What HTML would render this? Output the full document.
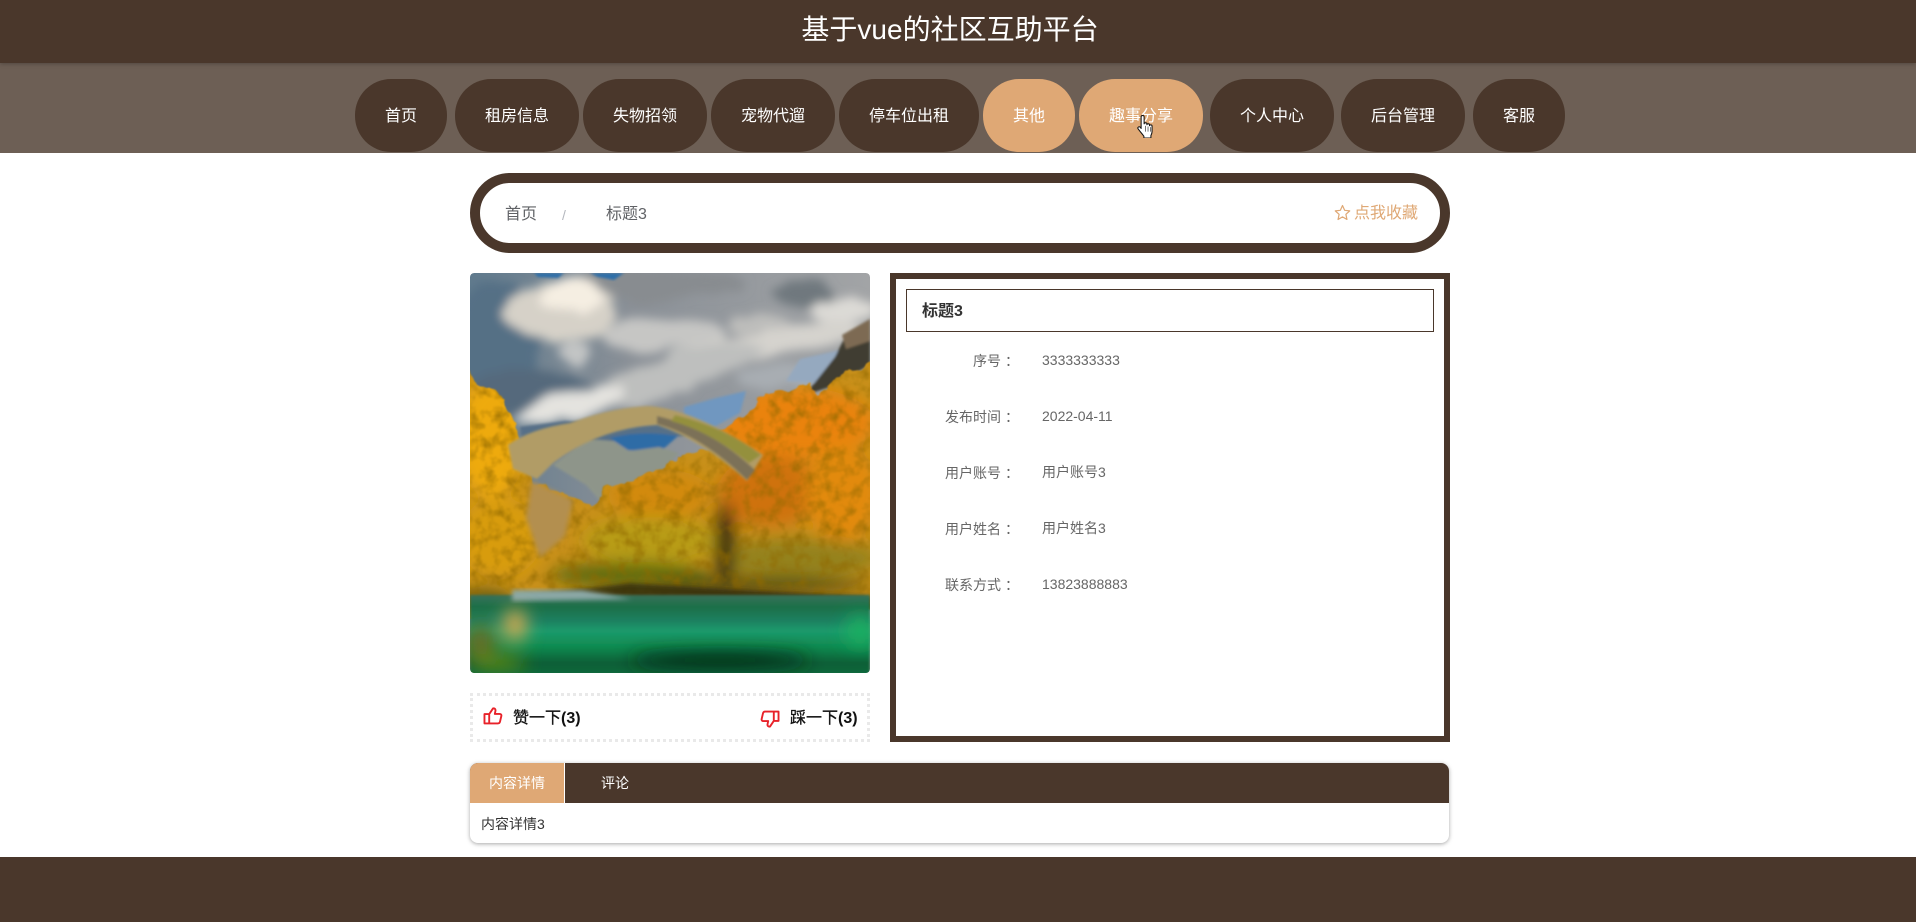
<!DOCTYPE html>
<html lang="zh-CN">
<head>
<meta charset="utf-8">
<title>基于vue的社区互助平台</title>
<style>
*{margin:0;padding:0;box-sizing:border-box}
html,body{width:1916px;height:922px;overflow:hidden;background:#fff}
body{position:relative;font-family:"Liberation Sans","Noto Sans CJK SC",sans-serif;color:#333}
.a{position:absolute;white-space:nowrap}
.hd{left:0;top:0;width:1916px;height:63px;background:#4a372b;box-shadow:0 1px 4px rgba(0,0,0,.25);z-index:2}
.ttl{left:-8px;top:10px;width:1916px;text-align:center;color:#fff;font-size:28px;line-height:40px;z-index:3}
.nv{left:0;top:63px;width:1916px;height:90px;background:#6d5f55}
.b{top:79px;height:73px;border-radius:36px;background:#4a372b;color:#fff;font-size:16px;line-height:75px;text-align:center}
.b.on{background:#dfa875}
.bc{left:470px;top:173px;width:980px;height:80px;border:10px solid #4a372b;border-radius:40px;background:#fff}
.lb{width:70px;text-align:right;left:945px;font-size:14px;line-height:20px;color:#666}
.lb i{font-style:normal;position:relative;left:4px}
.vl{left:1042px;font-size:14px;line-height:20px;color:#666}
.info{left:890px;top:273px;width:560px;height:469px;border:6px solid #4a372b;background:#fff}
.tb{left:906px;top:289px;width:528px;height:43px;border:1px solid #4a372b;background:#fff}
.lk{left:470px;top:693px;width:400px;height:49px;border:3px dotted #e9e9e9}
.zz{font-size:16px;line-height:22px;color:#111;-webkit-text-stroke:.3px #111}
.zz b{-webkit-text-stroke:0}
.tabs{left:470px;top:763px;width:979px;height:80px;border-radius:8px;box-shadow:0 1px 4px rgba(0,0,0,.35);background:#fff;overflow:hidden}
</style>
</head>
<body>
<div class="a hd"></div>
<div class="a ttl">基于vue的社区互助平台</div>
<div class="a nv"></div>
<div class="a b" style="left:355px;width:92px">首页</div>
<div class="a b" style="left:455px;width:124px">租房信息</div>
<div class="a b" style="left:583px;width:124px">失物招领</div>
<div class="a b" style="left:711px;width:124px">宠物代遛</div>
<div class="a b" style="left:839px;width:140px">停车位出租</div>
<div class="a b on" style="left:983px;width:92px">其他</div>
<div class="a b on" style="left:1079px;width:124px">趣事分享</div>
<div class="a b" style="left:1210px;width:124px">个人中心</div>
<div class="a b" style="left:1341px;width:124px">后台管理</div>
<div class="a b" style="left:1473px;width:92px">客服</div>

<svg class="a" style="left:1136px;top:115px;z-index:5" width="19" height="23" viewBox="1 .5 14 20">
<path d="M4.200 2c0-1.500 2.600-1.500 2.600 0v6.200c0-1.200 2.400-1.200 2.400 0v.8c0-1.100 2.300-1.100 2.300 0v.8c0-1 2.200-1 2.200.3v4.900c0 1.500-.5 2.300-1 3.300v2.200H6.600v-1.600c-1-1.300-2.200-2.700-5-6.300-.9-1.200.7-2.500 1.800-1.500l.8 1.100z" fill="#fff" stroke="#111" stroke-width=".9" stroke-linejoin="round"/>
<path d="M8 10v5M10.200 10.500v4.500M12.400 11v4" stroke="#555" stroke-width=".7"/>
</svg>

<div class="a bc"></div>
<div class="a" style="left:505px;top:204px;font-size:16px;line-height:22px;color:#606266">首页</div>
<div class="a" style="left:562px;top:204px;font-size:14px;line-height:22px;color:#b4b7be">/</div>
<div class="a" style="left:606px;top:204px;font-size:16px;line-height:22px;color:#606266">标题3</div>
<svg class="a" style="left:1334px;top:204px" width="17" height="17" viewBox="0 0 24 24"><path d="M12 2.200l3 6.700 7.200.8-5.400 4.900 1.500 7.200L12 18.200l-6.300 3.600 1.500-7.200L1.800 9.700 9 8.900z" fill="none" stroke="#dfa875" stroke-width="1.700" stroke-linejoin="round"/></svg>
<div class="a" style="left:1354px;top:203px;font-size:16px;line-height:22px;color:#dfa875">点我收藏</div>

<svg class="a" style="left:470px;top:273px;border-radius:4px" width="400" height="400" viewBox="0 0 400 400">
<defs>
<clipPath id="c"><rect width="400" height="400" rx="4"/></clipPath>
<linearGradient id="sky" x1="0" y1="0" x2="1" y2="0"><stop offset="0" stop-color="#607a8d"/><stop offset=".4" stop-color="#8a9097"/><stop offset="1" stop-color="#a2a4a6"/></linearGradient>
<linearGradient id="wat" x1="0" y1="0" x2="0" y2="1"><stop offset="0" stop-color="#38705a"/><stop offset=".15" stop-color="#1c6f48"/><stop offset=".32" stop-color="#1e8060"/><stop offset=".45" stop-color="#1b9a6c"/><stop offset=".65" stop-color="#0f8a50"/><stop offset=".85" stop-color="#0c5e36"/><stop offset="1" stop-color="#0e6a3c"/></linearGradient>
<filter id="b1" x="-20%" y="-20%" width="140%" height="140%"><feGaussianBlur stdDeviation="1.200"/></filter>
<filter id="b2" x="-20%" y="-20%" width="140%" height="140%"><feGaussianBlur stdDeviation="2.500"/></filter>
<filter id="b8" x="-40%" y="-40%" width="180%" height="180%"><feGaussianBlur stdDeviation="9"/></filter>
<filter id="b12" x="-60%" y="-60%" width="220%" height="220%"><feGaussianBlur stdDeviation="8"/></filter>
<filter id="cl" x="-20%" y="-20%" width="140%" height="140%"><feTurbulence type="fractalNoise" baseFrequency=".02 .035" numOctaves="3" seed="11" result="n"/><feDisplacementMap in="SourceGraphic" in2="n" scale="22" xChannelSelector="R" yChannelSelector="G"/><feGaussianBlur stdDeviation="5"/></filter>
<filter id="rough" x="-5%" y="-5%" width="110%" height="110%"><feTurbulence type="fractalNoise" baseFrequency=".07" numOctaves="3" seed="4" result="n"/><feDisplacementMap in="SourceGraphic" in2="n" scale="12" xChannelSelector="R" yChannelSelector="G"/><feGaussianBlur stdDeviation=".8"/></filter>
<filter id="spk" x="0" y="0" width="100%" height="100%"><feTurbulence type="fractalNoise" baseFrequency=".08" numOctaves="3" seed="9"/><feColorMatrix type="matrix" values="0 0 0 0 .28  0 0 0 0 .14  0 0 0 0 0  1.600 0 0 0 -.66"/><feGaussianBlur stdDeviation=".7"/></filter>
<mask id="tm"><path d="M-10 85L8 110 36 128 48 158 44 182 64 208 110 228 125 235 135 215 170 205 210 185 240 175 250 158 265 150 290 125 340 110 345 124 375 100 410 88V335L-10 345z" fill="#fff" filter="url(#rough)"/></mask>
</defs>
<g clip-path="url(#c)">
<rect width="400" height="400" fill="url(#sky)"/>
<g filter="url(#cl)">
<ellipse cx="25" cy="70" rx="45" ry="60" fill="#546f85"/>
<ellipse cx="60" cy="120" rx="70" ry="20" fill="#54697c"/>
<ellipse cx="190" cy="12" rx="90" ry="16" fill="#888c90"/>
<ellipse cx="335" cy="22" rx="32" ry="12" fill="#70787e"/>
<ellipse cx="92" cy="38" rx="55" ry="30" fill="#d6d1c8"/>
<ellipse cx="100" cy="22" rx="28" ry="16" fill="#f5eee2"/>
<ellipse cx="195" cy="62" rx="62" ry="18" fill="#c6c6c4"/>
<ellipse cx="285" cy="50" rx="28" ry="10" fill="#bdbdbb"/>
<ellipse cx="372" cy="38" rx="36" ry="12" fill="#dcdad6"/>
<ellipse cx="300" cy="70" rx="95" ry="14" fill="#d5d3ce" transform="rotate(-10 300 70)"/>
<ellipse cx="190" cy="105" rx="110" ry="18" fill="#bebfbe" transform="rotate(-18 190 105)"/>
<ellipse cx="100" cy="132" rx="55" ry="13" fill="#e4e3df" transform="rotate(-18 100 132)"/>
<ellipse cx="105" cy="80" rx="14" ry="12" fill="#c3c5c5"/>
<ellipse cx="320" cy="105" rx="55" ry="12" fill="#a8adb2"/>
</g>
<path d="M64 0h30l-6 5-20-1zM120 0h34l-10 7-16-3z" fill="#2f6ea8" filter="url(#b1)"/>
<g filter="url(#b1)">
<path d="M50 154l45-6 60 4 60-4 8 14-60 6-70 0-40 2z" fill="#566f88"/>
<path d="M214 134l32-9 30-7-6 22-26 14-30-8z" fill="#6f97c0"/>
<path d="M316 108l14-22 40-9-25 33z" fill="#95a9bf"/>
<path d="M335 122l30-38 10-20 25-14v42l-40 22z" fill="#3f3c31"/>
<path d="M372 62l28-16v22l-24 8z" fill="#7d6a52"/>
<path d="M140 165q30-8 68-2l-18 16-32-2z" fill="#2d6ca6"/>
<path d="M83 192l35-26 25 2 16 10 30-4 20 6-20 20-48 40-25-28z" fill="#8e958a"/>
</g>
<g mask="url(#tm)">
<rect width="400" height="400" fill="#c8901a"/>
<g filter="url(#b12)">
<ellipse cx="22" cy="165" rx="36" ry="60" fill="#eeaa0e"/>
<ellipse cx="30" cy="265" rx="42" ry="40" fill="#d89c0e"/>
<ellipse cx="15" cy="328" rx="30" ry="14" fill="#6f6010"/>
<ellipse cx="190" cy="222" rx="52" ry="26" fill="#d28a0e"/>
<ellipse cx="180" cy="268" rx="68" ry="24" fill="#b89c12"/>
<ellipse cx="160" cy="302" rx="80" ry="13" fill="#5f6a0e"/>
<ellipse cx="325" cy="150" rx="80" ry="36" fill="#ea830c"/>
<ellipse cx="300" cy="218" rx="52" ry="36" fill="#cf720c"/>
<ellipse cx="372" cy="220" rx="36" ry="50" fill="#e28a0c"/>
<ellipse cx="325" cy="285" rx="85" ry="20" fill="#94821a"/>
<ellipse cx="255" cy="270" rx="10" ry="42" fill="#2f240a"/>
<ellipse cx="290" cy="312" rx="110" ry="7" fill="#3f3f10"/>
</g>
<rect width="400" height="400" filter="url(#spk)"/>
<path d="M60 322l100-12 240 14v14H60z" fill="#23240a" filter="url(#b2)" opacity=".75"/>
</g>
<path d="M62 208l41 19-8 36-25 22-14-40z" fill="#b38f50" filter="url(#b2)"/>
<g filter="url(#b1)">
<path d="M38 172q22-16 62-22 40-15 77-17 45 2 116 49l-16 26q-47-42-90-56-57 3-104 38l-16 16-24-10z" fill="#b19c66"/>
<path d="M187 151q45 12 90 56l8-10q-45-42-98-54z" fill="#7c7158"/>
<path d="M205 142q50 12 86 40l-12 8q-40-32-78-42z" fill="#94903e"/>
</g>
<path d="M0 322h400v80H0z" fill="url(#wat)" filter="url(#b1)"/>
<path d="M42 317h70l50 9-120 2z" fill="#8ba8a6" filter="url(#b2)"/>
<g filter="url(#b8)">
<ellipse cx="10" cy="372" rx="16" ry="22" fill="#6d6a1c" opacity=".9"/>
<ellipse cx="45" cy="352" rx="12" ry="16" fill="#d8aa50"/>
<ellipse cx="28" cy="390" rx="28" ry="8" fill="#5a8a14"/>
<ellipse cx="250" cy="387" rx="90" ry="8" fill="#052c18"/>
<ellipse cx="390" cy="358" rx="14" ry="16" fill="#1db060"/>
</g>
</g>
</svg>

<div class="a lk"></div>
<svg class="a" style="left:483px;top:707px" width="20" height="18" viewBox="0 0 21 19"><path d="M6.500 7.500L10.500 1.500c2.200-.3 3 1 2.500 3l-.6 2.800h5c1.500 0 2.200 1 1.900 2.200l-1.400 6c-.3 1.200-1 1.800-2.200 1.800H1.500V7.500zM6.500 8v9.200" fill="none" stroke="#e8222a" stroke-width="2" stroke-linejoin="round"/></svg>
<div class="a zz" style="left:513px;top:708px">赞一下<b>(3)</b></div>
<svg class="a" style="left:760px;top:710px" width="20" height="18" viewBox="0 0 21 19"><path d="M14.500 11.500L10.500 17.500c-2.200.3-3-1-2.500-3l.6-2.800h-5c-1.500 0-2.200-1-1.900-2.200l1.400-6c.3-1.200 1-1.800 2.200-1.800h14.200v9.800zM14.500 11V1.800" fill="none" stroke="#e8222a" stroke-width="2" stroke-linejoin="round"/></svg>
<div class="a zz" style="left:790px;top:708px">踩一下<b>(3)</b></div>

<div class="a info"></div>
<div class="a tb"></div>
<div class="a" style="left:922px;top:301px;font-size:16px;line-height:22px;font-weight:bold;color:#333">标题3</div>
<div class="a lb" style="top:351px">序号<i>：</i></div><div class="a vl" style="top:350px">3333333333</div>
<div class="a lb" style="top:407px">发布时间<i>：</i></div><div class="a vl" style="top:406px">2022-04-11</div>
<div class="a lb" style="top:463px">用户账号<i>：</i></div><div class="a vl" style="top:462px">用户账号3</div>
<div class="a lb" style="top:519px">用户姓名<i>：</i></div><div class="a vl" style="top:518px">用户姓名3</div>
<div class="a lb" style="top:575px">联系方式<i>：</i></div><div class="a vl" style="top:574px">13823888883</div>

<div class="a tabs">
<div class="a" style="left:0;top:0;width:980px;height:40px;background:#4a372b"></div>
<div class="a" style="left:0;top:0;width:95px;height:40px;background:#dfa875;border-right:1px solid #fff;color:#fff;font-size:14px;line-height:40px;padding-left:19px">内容详情</div>
<div class="a" style="left:131px;top:0;color:#fff;font-size:14px;line-height:40px">评论</div>
<div class="a" style="left:11px;top:51px;font-size:14px;line-height:20px;color:#333">内容详情3</div>
</div>
<div class="a" style="left:0;top:857px;width:1916px;height:65px;background:#4a372b"></div>
</body>
</html>
